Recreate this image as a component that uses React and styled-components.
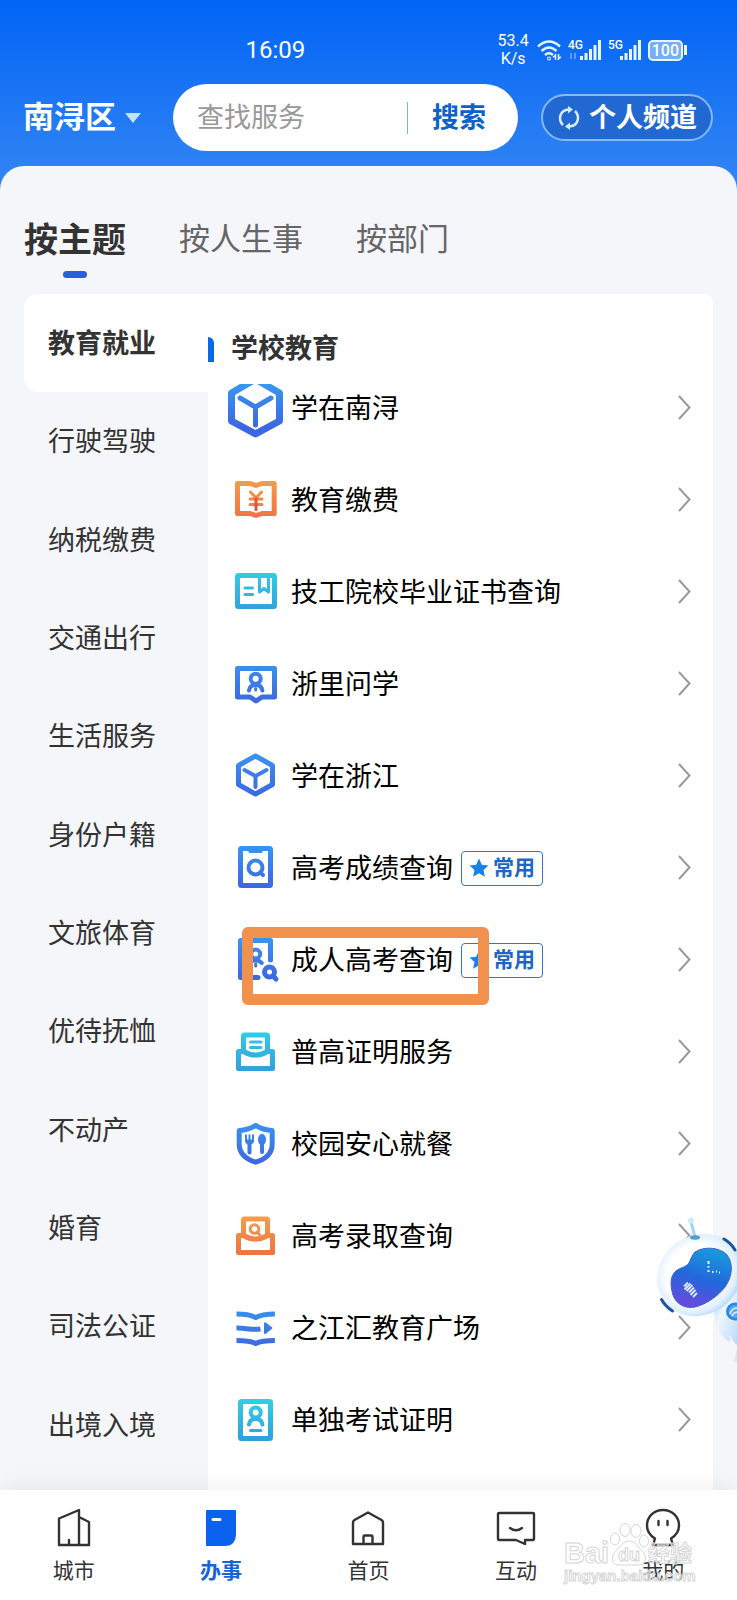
import { useState } from 'react';
import styled, { createGlobalStyle } from 'styled-components';

const GlobalStyle = createGlobalStyle`
	* {
		box-sizing: border-box;
	}
	body {
		margin: 0;
		background: #f5f6fa;
		font-family: Roboto, "Noto Sans CJK SC", sans-serif;
		color: #111;
	}
	button,
	input {
		font-family: inherit;
		border: none;
		background: none;
		padding: 0;
		margin: 0;
	}
	button {
		cursor: pointer;
	}
	a {
		color: inherit;
		text-decoration: none;
	}
	ul {
		list-style: none;
		margin: 0;
		padding: 0;
	}
`;

/* ---------- service icons ---------- */

const IconSvg = styled.svg`
	flex: none;
	width: 56px;
	height: 56px;
	overflow: visible;
	fill: none;
	stroke: url(#${({ $tone }) => $tone});
	stroke-width: 5px;
	stroke-linecap: round;
	stroke-linejoin: round;
	& .thin {
		stroke-width: 3px;
	}
	& .mid {
		stroke-width: 4px;
	}
	& .wide {
		stroke-width: 7px;
	}
	& .flat {
		stroke-linecap: butt;
	}
	& .solid {
		fill: url(#${({ $tone }) => $tone});
		stroke: none;
	}
`;

const HiddenSvg = styled.svg`
	position: absolute;
	width: 0;
	height: 0;
`;

const GradientDefs = () => (
	<HiddenSvg aria-hidden="true">
		<defs>
			<linearGradient id="blue" gradientUnits="userSpaceOnUse" x1="0" y1="6" x2="0" y2="48">
				<stop offset="0" stopColor="#3994ee" />
				<stop offset="1" stopColor="#3d66e2" />
			</linearGradient>
			<linearGradient id="orange" gradientUnits="userSpaceOnUse" x1="0" y1="6" x2="0" y2="48">
				<stop offset="0" stopColor="#f4a04c" />
				<stop offset="1" stopColor="#ef7141" />
			</linearGradient>
			<linearGradient id="cyan" gradientUnits="userSpaceOnUse" x1="0" y1="6" x2="0" y2="48">
				<stop offset="0" stopColor="#30d0e8" />
				<stop offset="1" stopColor="#319fdb" />
			</linearGradient>
			<clipPath id="cubeTop">
				<rect x="-4" y="4" width="64" height="60" />
			</clipPath>
		</defs>
	</HiddenSvg>
);

const shapes = {
	bigCube: (
		<g clipPath="url(#cubeTop)">
			<path className="wide" d="M27.5-1l24 14v28l-24 13-24-13V13z" />
			<path d="M12 18l15.5 9L43 18M27.5 27v18" />
		</g>
	),
	cube: (
		<>
			<path d="M27.5 8l17 9.500v19l-17 9.500-17-9.500v-19z" />
			<path className="mid" d="M16.500 22l11 6 11-6M27.500 28v11" />
		</>
	),
	yuanBook: (
		<>
			<path d="M9.500 11.500H22l6 2 6-2h12.200V41.500H34l-6 2-6-2H9.500z" />
			<path className="thin" d="M22.500 20l5.500 6 5.500-6M22 27h12M22 32.500h12" />
			<path className="thin" stroke="#e8502c" d="M28 27v10.500" />
		</>
	),
	certificate: (
		<>
			<rect x="9.500" y="11.500" width="37" height="31" rx="1" />
			<path className="thin" d="M17 24h7.500M17 30.500h7.500M31.500 12v16l4.500-3.500 4.500 3.500V12" />
		</>
	),
	askScreen: (
		<>
			<path d="M9.500 12.500h37V41H34l-6 4-6-4H9.500z" />
			<circle className="mid" cx="27.700" cy="22.800" r="5" />
			<path className="mid" d="M21 34.500c.5-4 2.500-5.500 6.700-5.500s6.200 1.500 6.700 5.500" />
			<path className="thin" d="M27.700 32.500v1.500" />
		</>
	),
	searchDoc: (
		<>
			<rect x="12.500" y="8.500" width="30" height="37" rx="1" />
			<path className="thin" d="M22 11.500h11" />
			<circle className="mid" cx="27.500" cy="27.500" r="7" />
			<path className="mid" d="M32 32.500l3 2.500" />
		</>
	),
	personSearch: (
		<>
			<path d="M30 45.500H12.500v-37h30V28" />
			<circle className="mid" cx="27.700" cy="22" r="4.500" />
			<path className="mid" d="M21 34c.5-4 2.500-5.500 6.700-5.500 3 0 4.800.8 6 2.500" />
			<path className="thin" d="M27.700 32v2" />
			<circle cx="41.500" cy="40" r="5" />
			<path d="M45.500 44.500l2.500 2.500" />
		</>
	),
	envelope: (
		<>
			<path d="M15.500 27V12q0-1 1-1h22q1 0 1 1v15" />
			<path d="M10.500 27.500h5q12 7 24 0h5v17h-34z" />
			<path className="thin" d="M22.500 18h10.500M22.500 23.500h10.500" />
		</>
	),
	envelopeSearch: (
		<>
			<path d="M15.500 27V12q0-1 1-1h22q1 0 1 1v15" />
			<path d="M10.500 27.500h5q12 7 24 0h5v17h-34z" />
			<circle className="thin" cx="26.500" cy="21" r="4.300" />
			<path className="thin" d="M29.500 24.500l2 2" />
		</>
	),
	canteen: (
		<>
			<path d="M27.700 9.300c5 3.200 10 4.800 16.500 5.200v13.500c0 9.500-6 15-16.500 18.200-10.500-3.200-16.500-8.700-16.500-18.200V14.500c6.500-.4 11.500-2 16.500-5.200z" />
			<path className="solid" d="M17 18.500h2v5h1.500v-5h2v5H24v-5h2v6.500q0 2.500-2.500 3.500v8q0 2-2 2t-2-2v-8q-2.500-1-2.500-3.500z" />
			<ellipse className="solid" cx="34" cy="23.500" rx="4" ry="5.800" />
			<path className="mid" d="M33.900 28l.2 8" />
		</>
	),
	streams: (
		<>
			<path
				className="flat"
				d="M8.500 14c8 0 14 .6 19.200 3.500 5.200-2.900 11-3.500 19.200-3.500M8.500 28c9-.5 14 2.500 24 1M8.500 40.500c8 0 14 .3 19.200 3 5.200-2.700 11-3 19.200-3"
			/>
			<path className="solid" d="M36 23.500q0-2 1.800-1l6.200 4.800q1 .7 0 1.500l-6.200 4.900q-1.800 1-1.800-1z" />
		</>
	),
	idDoc: (
		<>
			<rect x="12.500" y="9.500" width="30" height="37" rx="1" />
			<circle className="mid" cx="27.700" cy="20.500" r="5" />
			<path className="mid" d="M21 32.500c.5-4 2.500-5.500 6.700-5.500s6.200 1.500 6.700 5.500" />
			<path className="thin" d="M22.500 38.500h10.500" />
		</>
	),
};

const ServiceIcon = ({ shape, tone }) => (
	<IconSvg $tone={tone} viewBox="0 0 56 56" aria-hidden="true">
		{shapes[shape]}
	</IconSvg>
);

/* ---------- header ---------- */

const Screen = styled.div`
	position: relative;
	min-height: 100vh;
	display: flex;
	flex-direction: column;
	overflow: hidden;
	background: linear-gradient(#0064f5, #3586f3 190px);
`;

const StatusBar = styled.div`
	display: grid;
	grid-template-columns: 37fr 63fr;
	align-items: center;
	height: 84px;
	padding: 16px 50px 0 24px;
	color: #fff;
`;

const Clock = styled.time`
	justify-self: end;
	font-size: 24px;
	line-height: 28px;
	margin-right: -36px;
`;

const StatusIcons = styled.div`
	display: flex;
	align-items: center;
	justify-content: flex-end;
	gap: 6px;
`;

const Speed = styled.div`
	font-size: 16px;
	line-height: 18px;
	text-align: center;
	margin-right: 2px;
`;

const StatusSvg = styled.svg`
	height: 24px;
	fill: none;
	stroke: #e8f4ff;
	stroke-width: 3px;
	& text {
		font: 500 12px Roboto, sans-serif;
		fill: #fff;
		stroke: none;
	}
	& .arc {
		stroke-width: 2.5px;
	}
	& .arrows {
		stroke-width: 1.5px;
	}
	& .idle {
		stroke-width: 2px;
		opacity: 0.35;
	}
`;

const Battery = styled.div`
	display: flex;
	align-items: center;
	gap: 1px;
	& span {
		border: 2px solid #e8f4ff;
		border-radius: 5px;
		padding: 0 2px;
		font-size: 16px;
		font-weight: 500;
		line-height: 17px;
		background: #76aef8;
	}
	&::after {
		content: '';
		width: 3px;
		height: 10px;
		background: #e8f4ff;
	}
`;

const Signal = ({ label, dim }) => (
	<StatusSvg width="34" viewBox="0 0 34 24" aria-label={label}>
		<text x="0" y="11">
			{label}
		</text>
		{dim && <path className="idle" d="M3 15v6M7 15v6" />}
		<path d="M13.500 22v-4M18 22v-7M22.500 22V11M27 22V7M31.500 22V2" />
	</StatusSvg>
);

const TopRow = styled.header`
	display: flex;
	align-items: center;
	padding: 0 24px 0 23px;
	margin-bottom: 15px;
`;

const Region = styled.button`
	display: flex;
	align-items: center;
	gap: 9px;
	color: #fff;
	font-size: 31px;
	font-weight: 700;
	line-height: 40px;
	white-space: nowrap;
	&::after {
		content: '';
		border: 8px solid transparent;
		border-top: 10px solid #c4e2fd;
		border-bottom: 0;
	}
`;

const SearchForm = styled.form`
	flex: 1;
	min-width: 0;
	display: flex;
	align-items: center;
	height: 67px;
	margin: 0 23px 0 32px;
	padding: 0 32px 0 24px;
	border-radius: 34px;
	background: #fff;
	& input {
		flex: 1;
		min-width: 0;
		font-size: 27px;
		line-height: 36px;
		outline: none;
		&::placeholder {
			color: #999;
			opacity: 1;
		}
	}
	& button {
		padding-left: 24px;
		border-left: 1px solid #7fb0dd;
		color: #0d62c9;
		font-size: 27px;
		font-weight: 700;
		line-height: 32px;
	}
`;

const ChannelButton = styled.button`
	display: flex;
	align-items: center;
	gap: 8px;
	height: 47px;
	padding: 0 14px 0 14px;
	border: 2px solid #87b9f8;
	border-radius: 24px;
	background: #2268d2;
	color: #fff;
	font-size: 27px;
	font-weight: 700;
	line-height: 36px;
	white-space: nowrap;
`;

/* ---------- tabs ---------- */

const Panel = styled.main`
	flex: 1;
	display: flex;
	flex-direction: column;
	border-radius: 24px 24px 0 0;
	background: #f5f6fa;
`;

const Tabs = styled.div`
	display: flex;
	align-items: flex-end;
	gap: 53px;
	height: 128px;
	padding: 0 24px 16px;
`;

const Tab = styled.button`
	display: flex;
	flex-direction: column;
	align-items: center;
	gap: 7px;
	color: ${({ $active }) => ($active ? '#333' : '#666')};
	font-size: ${({ $active }) => ($active ? '34px' : '31px')};
	font-weight: ${({ $active }) => ($active ? 700 : 400)};
	line-height: 48px;
	&::after {
		content: '';
		width: 24px;
		height: 7px;
		border-radius: 4px;
		background: ${({ $active }) => ($active ? '#2b5fd9' : 'transparent')};
	}
`;

/* ---------- content ---------- */

const Content = styled.div`
	flex: 1;
	display: grid;
	grid-template-columns: 184px 1fr;
	margin: 0 24px;
`;

const Sidebar = styled.nav`
	display: grid;
	grid-auto-rows: 1fr;
	padding-bottom: 16px;
`;

const Category = styled.button`
	padding: 2px 0 0 24px;
	border-radius: 14px 0 0 14px;
	background: ${({ $active }) => ($active ? '#fff' : 'transparent')};
	color: #333;
	font-size: 27px;
	font-weight: ${({ $active }) => ($active ? 700 : 400)};
	line-height: 40px;
	text-align: left;
`;

const Services = styled.section`
	min-width: 0;
	padding-bottom: 24px;
	border-radius: 0 8px 0 0;
	background: #fff;
`;

const Heading = styled.h2`
	display: flex;
	align-items: center;
	gap: 17px;
	height: 68px;
	margin: 0;
	padding-top: 42px;
	color: #333;
	font-size: 27px;
	font-weight: 700;
	line-height: 26px;
	&::before {
		content: '';
		width: 6px;
		height: 25px;
		border-radius: 0 6px 0 0;
		background: #0a66ee;
	}
`;

const ServiceItem = styled.li`
	position: relative;
`;

const ServiceLink = styled.a`
	display: flex;
	align-items: center;
	height: 92px;
	padding: 0 22px 0 20px;
	font-size: 27px;
	line-height: 40px;
	color: #000;
	& .name {
		margin-left: 7px;
		padding-top: 2px;
		white-space: nowrap;
	}
	& .arrow {
		flex: none;
		margin-left: auto;
	}
`;

const Badge = styled.span`
	display: flex;
	align-items: center;
	gap: 4px;
	height: 35px;
	margin-left: 8px;
	padding: 0 7px;
	border: 1px solid #2f79bd;
	border-radius: 4px;
	color: #1b67c6;
	font-size: 21px;
	font-weight: 700;
	line-height: 32px;
	white-space: nowrap;
`;

const Marker = styled.div`
	position: absolute;
	top: 13px;
	left: 34px;
	width: 247px;
	height: 78px;
	border: 11px solid #f0914d;
	border-radius: 6px;
	pointer-events: none;
`;

/* ---------- bottom bar and overlays ---------- */

const BottomNav = styled.nav`
	position: relative;
	display: grid;
	grid-template-columns: repeat(5, 1fr);
	padding: 17px 0 14px;
	background: #fff;
	box-shadow: 0 -4px 20px rgba(0, 0, 0, 0.06);
`;

const NavLink = styled.a`
	display: flex;
	flex-direction: column;
	align-items: center;
	gap: 10px;
	color: ${({ $active }) => ($active ? '#1465d8' : '#333')};
	font-size: 21px;
	font-weight: ${({ $active }) => ($active ? 700 : 400)};
	line-height: 29px;
	& svg {
		fill: none;
		stroke: #333;
		stroke-width: 2.4px;
		stroke-linejoin: round;
		stroke-linecap: round;
	}
	& .filled {
		fill: #0a62ee;
		stroke: none;
	}
	& .dash {
		stroke: #fff;
		stroke-width: 3px;
	}
`;

const Assistant = styled.svg`
	position: absolute;
	right: 0;
	bottom: 220px;
	width: 107px;
	height: 190px;
`;

const Watermark = styled.svg`
	position: absolute;
	right: 32px;
	bottom: 8px;
	width: 145px;
	height: 76px;
	pointer-events: none;
	fill: #fff;
	fill-opacity: 0.5;
	stroke: #d6d6d6;
	stroke-width: 1px;
	font-family: "Liberation Sans", "Noto Sans CJK SC", sans-serif;
	font-weight: 700;
`;

const Robot = () => (
	<Assistant viewBox="0 0 107 190" role="img" aria-label="智能助手">
		<defs>
			<radialGradient id="head" cx=".48" cy=".45" r=".56">
				<stop offset=".6" stopColor="#fff" />
				<stop offset=".86" stopColor="#e0effe" />
				<stop offset="1" stopColor="#b4d7fa" />
			</radialGradient>
			<linearGradient id="face" x1=".65" y1="0" x2=".35" y2="1">
				<stop offset="0" stopColor="#189bdc" />
				<stop offset=".5" stopColor="#2169dc" />
				<stop offset="1" stopColor="#6a48df" />
			</linearGradient>
			<linearGradient id="body" x1="0" y1="0" x2="1" y2="1">
				<stop offset="0" stopColor="#a9d4fa" />
				<stop offset=".4" stopColor="#eef6ff" />
				<stop offset="1" stopColor="#bcd9f8" />
			</linearGradient>
		</defs>
		<path d="M84 118q1 19 9 29l6 5q2-4-1-12 4 12 9 15v-57z" fill="url(#body)" />
		<path d="M107 158l-3 14h3z" fill="#e0e5ee" />
		<circle cx="105" cy="121.500" r="9" fill="#2a86e0" />
		<circle cx="105" cy="121.500" r="6.500" fill="#58a9ef" />
		<path d="M100 124q2-6 7-6M102 126q2-4 6-4" stroke="#e3f3ff" strokeWidth="1.500" fill="none" />
		<ellipse cx="69.500" cy="85" rx="44" ry="39.500" transform="rotate(-38 69.500 85)" fill="url(#head)" />
		<path d="M61 32l4 15" stroke="#a3d4ef" strokeWidth="3" />
		<circle cx="61" cy="30.500" r="3" fill="#cdeaf8" />
		<ellipse cx="65" cy="47.500" rx="5" ry="2.200" fill="#4f9fd2" />
		<path d="M94 49q7 4 11 11" stroke="#1b549f" strokeWidth="3" strokeLinecap="round" fill="none" />
		<path d="M31.500 109.500q4 7 11 11.500" stroke="#1b549f" strokeWidth="3" strokeLinecap="round" fill="none" />
		<path
			d="M65 62C74 56 90 57 97 65c7 9 5 22-2 32-7 9-18 17-30 20-10 2-19-3-22-12-3-10-3-19 3-24 5-4 9-3 13-8 2-4 3-8 6-11z"
			fill="url(#face)"
			stroke="#3b62c8"
			strokeWidth="1"
		/>
		<path
			d="M78.500 71v3M78.500 76v1.500M78.500 80v2M82 82h1.500M86 81.500h1M89 82.500h1"
			stroke="#e6fbff"
			strokeWidth="2"
			fill="none"
		/>
		<path
			d="M54 96.500l4-4M54.500 99.500l6-6M56.500 101l6-6M59 102.500l5-5M60.500 105l5-5M63 107l4-4"
			stroke="#dcecff"
			strokeWidth="1.800"
			fill="none"
		/>
	</Assistant>
);

const navIcons = {
	city: <path d="M5 38V11.500L25 3v35zM25 10l10 5v23H25M15 38v-5" />,
	work: (
		<>
			<path className="filled" d="M6 3h28q1 0 1 1v22q0 13-11 13H6q-1 0-1-1V4q0-1 1-1z" />
			<path className="dash" d="M12 12.500h7" />
		</>
	),
	home: (
		<path d="M5 37V15.500Q5 14 6.500 13L20 5.500 33.500 13q1.500 1 1.500 2.500V37zM15.500 37v-7q0-1.500 1.500-1.500h6q1.500 0 1.500 1.500v7" />
	),
	chat: <path d="M3 6h34q1 0 1 1v25q0 1-1 1h-8v4l-9-4H3q-1 0-1-1V7q0-1 1-1zM14 21q6 4.500 12 0" />,
	me: (
		<>
			<path d="M10 38l2-6.500C7 28.500 4 24 4 18.500 4 9.500 11 3 20 3s16 6.500 16 15.500c0 5.500-3 10-8 13l2 6.500z" />
			<path d="M15.500 14v4M24.500 14v4" />
		</>
	),
};

const tabs = ['按主题', '按人生事', '按部门'];

const categories = [
	'教育就业', '行驶驾驶', '纳税缴费', '交通出行', '生活服务', '身份户籍',
	'文旅体育', '优待抚恤', '不动产', '婚育', '司法公证', '出境入境',
];

const services = [
	{ name: '学在南浔', shape: 'bigCube', tone: 'blue' },
	{ name: '教育缴费', shape: 'yuanBook', tone: 'orange' },
	{ name: '技工院校毕业证书查询', shape: 'certificate', tone: 'cyan' },
	{ name: '浙里问学', shape: 'askScreen', tone: 'blue' },
	{ name: '学在浙江', shape: 'cube', tone: 'blue' },
	{ name: '高考成绩查询', shape: 'searchDoc', tone: 'blue', common: true },
	{ name: '成人高考查询', shape: 'personSearch', tone: 'blue', common: true, marked: true },
	{ name: '普高证明服务', shape: 'envelope', tone: 'cyan' },
	{ name: '校园安心就餐', shape: 'canteen', tone: 'blue' },
	{ name: '高考录取查询', shape: 'envelopeSearch', tone: 'orange' },
	{ name: '之江汇教育广场', shape: 'streams', tone: 'blue' },
	{ name: '单独考试证明', shape: 'idDoc', tone: 'cyan' },
];

const navItems = [
	{ label: '城市', icon: 'city' },
	{ label: '办事', icon: 'work' },
	{ label: '首页', icon: 'home' },
	{ label: '互动', icon: 'chat' },
	{ label: '我的', icon: 'me' },
];

const App = () => {
	const [tab, setTab] = useState('按主题');
	const [category, setCategory] = useState('教育就业');

	return (
		<Screen>
			<GlobalStyle />
			<GradientDefs />
			<StatusBar>
				<Clock>16:09</Clock>
				<StatusIcons>
					<Speed>
						53.4
						<br />
						K/s
					</Speed>
					<StatusSvg width="25" viewBox="0 0 25 24" aria-hidden="true">
						<path className="arc" d="M1 8.500q11-10 22 0M4.500 13q7.500-7 15 0M8 17q4-3.500 8 0" />
						<circle cx="12" cy="20.500" r=".5" />
						<path className="arrows" d="M18.500 16v6M18 18l-2 1M21.500 16v6M22 20l2-1" />
					</StatusSvg>
					<Signal label="4G" dim />
					<Signal label="5G" />
					<Battery>
						<span>100</span>
					</Battery>
				</StatusIcons>
			</StatusBar>

			<TopRow>
				<Region type="button">南浔区</Region>
				<SearchForm role="search" onSubmit={(e) => e.preventDefault()}>
					<input type="text" placeholder="查找服务" aria-label="查找服务" />
					<button type="submit">搜索</button>
				</SearchForm>
				<ChannelButton type="button">
					<svg width="24" height="26" viewBox="0 0 24 26" fill="none" stroke="#d6ecff" strokeWidth="2.500" aria-hidden="true">
						<path d="M6 20C1 15 2 5 12 4.500M18 6c5 5 4 15-6 15.500" />
						<path d="M11 1l5 3.500-5 4zM13 17.500L8 21.500l5 3.500z" fill="#d6ecff" stroke="none" />
					</svg>
					个人频道
				</ChannelButton>
			</TopRow>

			<Panel>
				<Tabs>
					{tabs.map((name) => (
						<Tab key={name} type="button" $active={name === tab} onClick={() => setTab(name)}>
							{name}
						</Tab>
					))}
				</Tabs>
				<Content>
					<Sidebar>
						{categories.map((name) => (
							<Category
								key={name}
								type="button"
								$active={name === category}
								onClick={() => setCategory(name)}
							>
								{name}
							</Category>
						))}
					</Sidebar>
					<Services>
						<Heading>学校教育</Heading>
						<ul>
							{services.map(({ name, shape, tone, common, marked }) => (
								<ServiceItem key={name}>
									<ServiceLink href="#">
										<ServiceIcon shape={shape} tone={tone} />
										<span className="name">{name}</span>
										{common && (
											<Badge>
												<svg width="20" height="20" viewBox="0 0 20 20" fill="#1583ea" aria-hidden="true">
													<path d="M10 0.500l2.800 6.200 6.700.7-5 4.600 1.400 6.700L10 15.300l-5.900 3.400L5.500 12l-5-4.600 6.700-.7z" />
												</svg>
												常用
											</Badge>
										)}
										<svg
											className="arrow"
											width="13"
											height="26"
											viewBox="0 0 13 26"
											fill="none"
											stroke="#999"
											strokeWidth="2"
											aria-hidden="true"
										>
											<path d="M1 1L11.500 12.500 1 24" />
										</svg>
									</ServiceLink>
									{marked && <Marker />}
								</ServiceItem>
							))}
						</ul>
					</Services>
				</Content>
			</Panel>

			<BottomNav>
				{navItems.map(({ label, icon }) => (
					<NavLink key={label} href="#" $active={icon === 'work'}>
						<svg width="40" height="40" viewBox="0 0 40 40" aria-hidden="true">
							{navIcons[icon]}
						</svg>
						{label}
					</NavLink>
				))}
			</BottomNav>

			<Robot />
			<Watermark viewBox="0 0 145 76" aria-hidden="true">
				<text x="4" y="47" fontSize="29">
					Bai
				</text>
				<ellipse cx="55" cy="23" rx="4.500" ry="6" />
				<ellipse cx="65" cy="14" rx="5" ry="6.500" />
				<ellipse cx="76" cy="15" rx="5" ry="6.500" />
				<ellipse cx="84" cy="25" rx="4.500" ry="6" />
				<path d="M69 25c6 0 9 6 14 11 5 6 2 13-4 13H59c-7 0-9-7-4-13 5-5 8-11 14-11z" />
				<text x="58" y="45" fontSize="18">
					du
				</text>
				<text x="88" y="45" fontSize="22">
					经验
				</text>
				<text x="4" y="65" fontSize="15">
					jingyan.baidu.com
				</text>
			</Watermark>
		</Screen>
	);
};

export default App;
